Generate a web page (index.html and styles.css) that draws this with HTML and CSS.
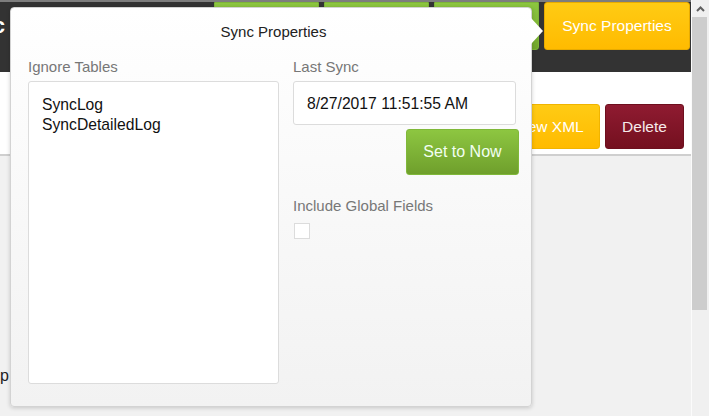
FILE: index.html
```html
<!DOCTYPE html>
<html lang="en">
<head>
    <meta charset="UTF-8">
    <meta name="viewport" content="width=device-width, initial-scale=1.0">
    <title>Sync Properties</title>
    <link rel="stylesheet" href="styles.css">
</head>
<body>

    <div class="window">
        <div class="page">
            <header class="topbar">
                <div class="edge edge-title"><span>Sync</span></div>
                <nav class="tabs">
                    <!-- these tabs sit under the popover, only their top edge shows -->
                    <button class="tab tab-green" aria-label="Tables"></button>
                    <button class="tab tab-green" aria-label="Fields"></button>
                    <button class="tab tab-green" aria-label="Schedule"></button>
                    <button class="tab tab-yellow">Sync Properties</button>
                </nav>
            </header>

            <div class="toolbar">
                <button class="btn btn-yellow">View XML</button>
                <button class="btn btn-red">Delete</button>
            </div>

            <main class="content">
                <div class="edge edge-text"><span>Setup</span></div>
            </main>

            <!-- Popover opened from the Sync Properties tab -->
            <div class="popover">
                <div class="popover-arrow"></div>
                <h3 class="popover-title">Sync Properties</h3>

                <div class="popover-body">
                    <div class="col col-left">
                        <label class="field-label" for="ignoreTables">Ignore Tables</label>
                        <div class="list-box" id="ignoreTables">
                            <div>SyncLog</div>
                            <div>SyncDetailedLog</div>
                        </div>
                    </div>

                    <div class="col col-right">
                        <label class="field-label" for="lastSync">Last Sync</label>
                        <div class="text-box" id="lastSync">8/27/2017 11:51:55 AM</div>
                        <div class="btn-row">
                            <button class="btn-now">Set to Now</button>
                        </div>

                        <label class="field-label label-spaced" for="globalFields">Include Global Fields</label>
                        <span class="check-box" id="globalFields"></span>
                    </div>
                </div>
            </div>
        </div>

        <div class="scrollbar">
            <div class="scroll-up">
                <svg width="9" height="6" viewBox="0 0 9 6">
                    <path d="M1 5 L4.5 1.5 L8 5" fill="none" stroke="#606060" stroke-width="2"/>
                </svg>
            </div>
            <div class="scroll-thumb"></div>
        </div>
    </div>

</body>
</html>
```

FILE: styles.css
```css
* {
    box-sizing: border-box;
}

body {
    font-family: 'Liberation Sans', Arial, sans-serif;
    margin: 0;
    padding: 0;
    background-color: #f1f1f1;
}

.window {
    display: flex;
    height: 416px;
    overflow: hidden;
}

.page {
    position: relative;
    flex: 1;
    display: flex;
    flex-direction: column;
    background-color: #f1f1f1;
}

/* Clips text so only its last letters show at the left edge */
.edge {
    display: flex;
    justify-content: flex-end;
    overflow: hidden;
    white-space: nowrap;
}

/* Header */
.topbar {
    height: 72px;
    background-color: #333;
    border-top: 2px solid #7d7d7d;
    display: flex;
    justify-content: space-between;
    align-items: flex-start;
}

.edge-title {
    width: 5px;
    margin-top: 11px;
    color: #fff;
    font-size: 22px;
    font-weight: 700;
    line-height: 26px;
}

.tabs {
    display: flex;
    gap: 5px;
    padding-right: 1px;
}

.tab {
    height: 48px;
    border-radius: 0 0 3px 3px;
    font-family: inherit;
    font-size: 15.5px;
    color: #fff;
    white-space: nowrap;
    cursor: pointer;
}

.tab-green {
    width: 105px;
    background: linear-gradient(#8cc63f, #72a62e);
    border: 1px solid #7db537;
}

.tab-yellow {
    width: 146px;
    background: linear-gradient(#ffcb14, #ffbb00);
    border: 1px solid #e8ab00;
    border-radius: 3px;
}

/* Toolbar */
.toolbar {
    height: 84px;
    background-color: #fff;
    border-bottom: 2px solid #cfcfcf;
    display: flex;
    justify-content: flex-end;
    align-items: flex-start;
    gap: 5px;
    padding: 32px 7px 0 0;
}

.btn {
    height: 45px;
    border-radius: 3px;
    font-family: inherit;
    font-size: 15.5px;
    color: #fff;
    padding: 0;
    white-space: nowrap;
    cursor: pointer;
}

.btn-yellow {
    width: 102px;
    background: linear-gradient(#ffcb14, #ffbb00);
    border: 1px solid #f0b400;
}

.btn-red {
    width: 79px;
    background: linear-gradient(#8f1b31, #74101f);
    border: 1px solid #6e0f1e;
    color: #f6eaea;
}

.content {
    flex: 1;
    padding-top: 210px;
}

.edge-text {
    width: 9px;
    color: #222;
    font-size: 16px;
    line-height: 20px;
}

/* Popover */
.popover {
    position: absolute;
    left: 10px;
    top: 7px;
    width: 522px;
    height: 400px;
    padding: 14px 12px 0 17px;
    background: linear-gradient(#ffffff, #f2f2f2);
    border: 1px solid #d3d3d3;
    border-radius: 4px;
    box-shadow: 0 1px 4px rgba(0, 0, 0, 0.18);
}

.popover-arrow {
    position: absolute;
    top: 10px;
    right: -12px;
    width: 0;
    height: 0;
    border-top: 13px solid transparent;
    border-bottom: 13px solid transparent;
    border-left: 12px solid #fff;
}

.popover-title {
    margin: 0;
    font-size: 15px;
    font-weight: 400;
    line-height: 20px;
    color: #222;
    text-align: center;
}

.popover-body {
    display: flex;
    gap: 14px;
    margin-top: 15px;
}

.col-left {
    width: 251px;
}

.col-right {
    width: 226px;
}

.field-label {
    display: block;
    font-size: 15px;
    line-height: 20px;
    color: #777;
    margin-bottom: 4px;
}

.label-spaced {
    margin-top: 21px;
    margin-bottom: 7px;
}

.list-box {
    height: 303px;
    padding: 13px 13px;
    background-color: #fff;
    border: 1px solid #dcdcdc;
    border-radius: 3px;
    font-size: 15.7px;
    line-height: 20px;
    color: #111;
}

.text-box {
    width: 223px;
    height: 44px;
    padding: 0 13px;
    background-color: #fff;
    border: 1px solid #dcdcdc;
    border-radius: 3px;
    font-size: 15.7px;
    line-height: 44px;
    color: #111;
}

.btn-row {
    display: flex;
    justify-content: flex-end;
    margin-top: 4px;
}

.btn-now {
    width: 113px;
    height: 46px;
    background: linear-gradient(#8dc641, #6f9f2c);
    border: 1px solid #80b83a;
    border-radius: 3px;
    font-family: inherit;
    font-size: 16px;
    color: #f2fff2;
    cursor: pointer;
}

.check-box {
    display: block;
    width: 16px;
    height: 16px;
    margin-left: 1px;
    background-color: #fff;
    border: 1px solid #dcdcdc;
}

/* Fake window scrollbar */
.scrollbar {
    width: 18px;
    background-color: #f0f0f0;
    border-left: 1px solid #fbfbfb;
}

.scroll-up {
    height: 17px;
    display: flex;
    align-items: center;
    justify-content: center;
    padding-right: 1px;
}

.scroll-thumb {
    height: 293px;
    margin: 0 2px 0 0;
    background-color: #cdcdcd;
}
```
